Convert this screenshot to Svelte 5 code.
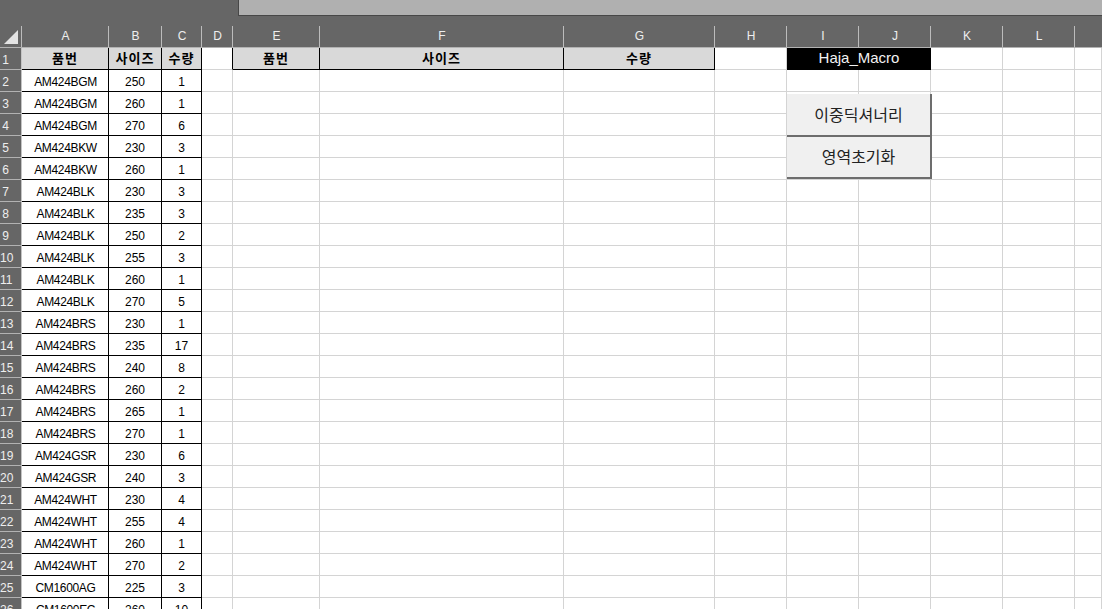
<script lang="ts">
  const letters = ['A', 'B', 'C', 'D', 'E', 'F', 'G', 'H', 'I', 'J', 'K', 'L', ''];

  const rows: [string, number, number][] = [
    ['AM424BGM', 250, 1],
    ['AM424BGM', 260, 1],
    ['AM424BGM', 270, 6],
    ['AM424BKW', 230, 3],
    ['AM424BKW', 260, 1],
    ['AM424BLK', 230, 3],
    ['AM424BLK', 235, 3],
    ['AM424BLK', 250, 2],
    ['AM424BLK', 255, 3],
    ['AM424BLK', 260, 1],
    ['AM424BLK', 270, 5],
    ['AM424BRS', 230, 1],
    ['AM424BRS', 235, 17],
    ['AM424BRS', 240, 8],
    ['AM424BRS', 260, 2],
    ['AM424BRS', 265, 1],
    ['AM424BRS', 270, 1],
    ['AM424GSR', 230, 6],
    ['AM424GSR', 240, 3],
    ['AM424WHT', 230, 4],
    ['AM424WHT', 255, 4],
    ['AM424WHT', 260, 1],
    ['AM424WHT', 270, 2],
    ['CM1600AG', 225, 3],
    ['CM1600EC', 260, 10]
  ];

  // D to M are empty on every data row
  const blanks = Array(10);
</script>

<div class="window">
  <div class="ribbon">
    <div class="tab-bar"></div>
  </div>

  <div class="cols col-head">
    <div class="corner">
      <svg width="21" height="21" viewBox="0 0 21 21">
        <polygon points="18,4 18,18 4,18" fill="#e3e3e3" />
      </svg>
    </div>
    {#each letters as letter}
      <div class="col-label">{letter}</div>
    {/each}
  </div>

  <div class="cols row">
    <div class="row-num"><span>1</span></div>
    <div class="cell head bk">품번</div>
    <div class="cell head bk">사이즈</div>
    <div class="cell head bk">수량</div>
    <div class="cell right-bk"></div>
    <div class="cell head bk">품번</div>
    <div class="cell head bk">사이즈</div>
    <div class="cell head bk">수량</div>
    <div class="cell"></div>
    <div class="cell title">Haja_Macro</div>
    <div class="cell"></div>
    <div class="cell"></div>
    <div class="cell"></div>
  </div>

  {#each rows as [code, size, qty], i}
    <div class="cols row">
      <div class="row-num"><span>{i + 2}</span></div>
      <div class="cell bk code">{code}</div>
      <div class="cell bk">{size}</div>
      <div class="cell bk">{qty}</div>
      {#each blanks as _}
        <div class="cell"></div>
      {/each}
    </div>
  {/each}

  <div class="macro-btn first">이중딕셔너리</div>
  <div class="macro-btn second">영역초기화</div>
</div>

<style>
  :global(body) {
    margin: 0;
    background: #fff;
  }

  .window {
    position: relative;
    width: 1102px;
    height: 609px;
    overflow: hidden;
    font-family: "Liberation Sans", "Noto Sans CJK KR", sans-serif;
    font-size: 12px;
    color: #000;
  }

  .ribbon {
    height: 26px;
    background: #666;
    box-sizing: border-box;
    padding-left: 238px;
  }

  .tab-bar {
    height: 16px;
    box-sizing: border-box;
    background: #b0b0b0;
    border-left: 1px solid #474747;
    border-bottom: 1px solid #474747;
  }

  .cols {
    display: grid;
    grid-template-columns: 22px 87px 53px 40px 31px 87px 244px 151px 72px 72px 72px 72px 72px 1fr;
  }

  .col-head {
    height: 22px;
    background: #666;
    box-sizing: border-box;
    border-bottom: 1px solid #b2b2b2;
  }

  .corner {
    border-right: 1px solid #bcbcbc;
    height: 21px;
  }

  .corner svg {
    display: block;
  }

  .col-label {
    border-right: 1px solid #bcbcbc;
    color: #eee;
    text-align: center;
    line-height: 21px;
    padding-left: 1px;
  }

  .col-label:last-child {
    border-right: 0;
  }

  .row {
    height: 22px;
  }

  .row-num {
    background: #666;
    border-right: 1px solid #c4c4c4;
    border-bottom: 1px solid #b2b2b2;
    color: #eee;
    line-height: 24px;
    height: 21px;
    overflow: hidden;
  }

  .row-num span {
    display: block;
    width: 11px;
    text-align: center;
    white-space: nowrap;
  }

  .cell {
    box-sizing: border-box;
    height: 22px;
    border-right: 1px solid #d4d4d4;
    border-bottom: 1px solid #d4d4d4;
    text-align: center;
    line-height: 24px;
  }

  .code {
    letter-spacing: -0.35px;
    padding-left: 1px;
  }

  .bk {
    border-right-color: #000;
    border-bottom-color: #000;
  }

  .right-bk {
    border-right-color: #000;
  }

  .head {
    background: #d9d9d9;
    font-family: "Noto Sans CJK KR", sans-serif;
    font-size: 13px;
    font-weight: 700;
    line-height: 20px;
    letter-spacing: 1px;
  }

  .title {
    grid-column: span 2;
    background: #000;
    border-color: #000;
    color: #f2f2f2;
    font-size: 15px;
    line-height: 20px;
    padding-left: 1px;
  }

  .macro-btn {
    position: absolute;
    left: 787px;
    width: 145px;
    box-sizing: border-box;
    display: flex;
    align-items: center;
    justify-content: center;
    padding-bottom: 2px;
    background: #f0f0f0;
    border-right: 2px solid #6d6d6d;
    border-bottom: 2px solid #6d6d6d;
    font-family: "Noto Sans CJK KR", sans-serif;
    font-size: 16px;
    color: #222;
  }

  .first {
    top: 94px;
    height: 43px;
  }

  .second {
    top: 137px;
    height: 42px;
  }
</style>
